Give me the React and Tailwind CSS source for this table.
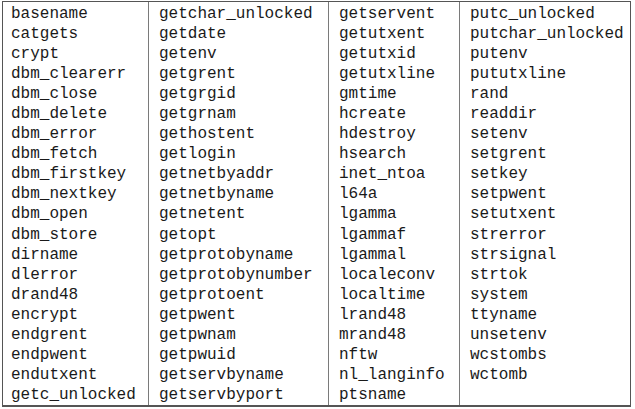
import React from 'react';

const columns = [
  ['basename', 'catgets', 'crypt', 'dbm_clearerr', 'dbm_close', 'dbm_delete', 'dbm_error', 'dbm_fetch', 'dbm_firstkey', 'dbm_nextkey', 'dbm_open', 'dbm_store', 'dirname', 'dlerror', 'drand48', 'encrypt', 'endgrent', 'endpwent', 'endutxent', 'getc_unlocked'],
  ['getchar_unlocked', 'getdate', 'getenv', 'getgrent', 'getgrgid', 'getgrnam', 'gethostent', 'getlogin', 'getnetbyaddr', 'getnetbyname', 'getnetent', 'getopt', 'getprotobyname', 'getprotobynumber', 'getprotoent', 'getpwent', 'getpwnam', 'getpwuid', 'getservbyname', 'getservbyport'],
  ['getservent', 'getutxent', 'getutxid', 'getutxline', 'gmtime', 'hcreate', 'hdestroy', 'hsearch', 'inet_ntoa', 'l64a', 'lgamma', 'lgammaf', 'lgammal', 'localeconv', 'localtime', 'lrand48', 'mrand48', 'nftw', 'nl_langinfo', 'ptsname'],
  ['putc_unlocked', 'putchar_unlocked', 'putenv', 'pututxline', 'rand', 'readdir', 'setenv', 'setgrent', 'setkey', 'setpwent', 'setutxent', 'strerror', 'strsignal', 'strtok', 'system', 'ttyname', 'unsetenv', 'wcstombs', 'wctomb'],
];

const pads = ['pl-[8px]', 'pl-[10px]', 'pl-[10px]', 'pl-[10px]'];

export default function App() {
  return (
    <div className="w-[635px] h-[409px] bg-white pt-[1px] pl-[2px]">
      {/* Function table */}
      <div
        className="w-[629px] h-[406px] border border-[#555] border-b-2 grid grid-cols-[145px_180px_131px_1fr] text-[16px] leading-[20px] text-[#1a1a1a]"
        style={{ fontFamily: '"Liberation Mono", "Courier New", monospace' }}
      >
        {columns.map((col, i) => (
          <div key={i} className={`pt-[2px] ${pads[i]} ${i > 0 ? 'border-l border-[#7a7a7a]' : ''}`}>
            {col.map((name) => (
              <div key={name} className="h-[20.05px] whitespace-pre">{name}</div>
            ))}
          </div>
        ))}
      </div>
    </div>
  );
}
